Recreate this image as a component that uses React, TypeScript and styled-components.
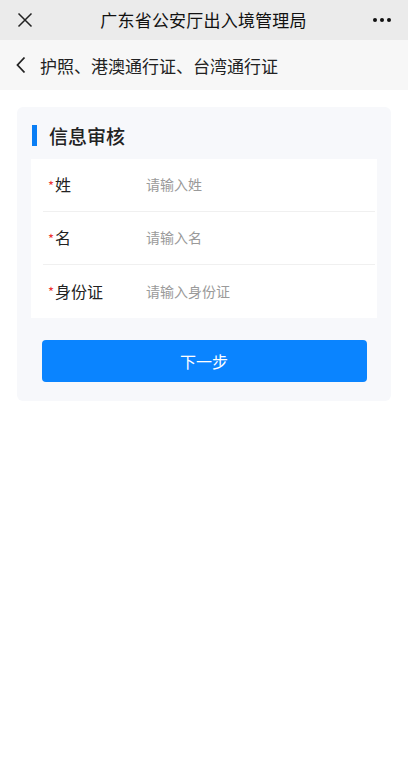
import styled, { createGlobalStyle } from "styled-components";

const GlobalStyle = createGlobalStyle`
  html, body {
    margin: 0;
    padding: 0;
    background: #ffffff;
    font-family: "Noto Sans CJK SC", "Noto Sans", sans-serif;
  }
`;

const Page = styled.div`
  width: 408px;
  min-height: 782px;
  background: #ffffff;
`;

const TopBar = styled.header`
  height: 40px;
  background: #ebebeb;
  display: flex;
  align-items: center;
  justify-content: space-between;
  padding: 0 14px 0 13px;
  box-sizing: border-box;
`;

const TopTitle = styled.h1`
  margin: 0 0 2px 0;
  font-size: 17px;
  font-weight: 400;
  color: #111;
  letter-spacing: 0.2px;
`;

const IconBox = styled.div`
  width: 24px;
  display: flex;
  align-items: center;
  justify-content: center;
`;

const SubBar = styled.div`
  height: 50px;
  background: #f7f7f7;
  display: flex;
  align-items: center;
  padding-left: 15px;
  gap: 13px;
`;

const SubTitle = styled.span`
  font-size: 17px;
  color: #222;
`;

const Body = styled.main`
  padding: 17px 17px 0 17px;
`;

const Card = styled.section`
  background: #f7f8fb;
  border-radius: 6px;
  padding: 17px 14px 19px 14px;
`;

const SectionTitle = styled.h2`
  margin: 0 0 13px 0;
  display: flex;
  align-items: center;
  gap: 12px;
  font-size: 19px;
  font-weight: 500;
  color: #222;
  height: 22px;
  &::before {
    content: "";
    width: 5px;
    height: 21px;
    background: #0a7ef5;
    margin-left: 1px;
  }
`;

const Form = styled.div`
  background: #ffffff;
  padding: 0 2px 0 12px;
`;

const Row = styled.div<{ $last?: boolean }>`
  box-sizing: border-box;
  height: 53px;
  padding-bottom: 2px;
  display: flex;
  align-items: center;
  border-bottom: ${(p) => (p.$last ? "none" : "1px solid #f0f0f0")};
`;

const Label = styled.label`
  width: 103px;
  padding-left: 5px;
  box-sizing: border-box;
  font-size: 16px;
  color: #222;
  display: flex;
  align-items: center;
`;

const Star = styled.span`
  color: #e33;
  font-size: 13px;
  margin-right: 1px;
  padding-top: 2px;
`;

const Input = styled.input`
  border: none;
  outline: none;
  background: transparent;
  font-family: inherit;
  font-size: 14px;
  color: #333;
  flex: 1;
  padding: 0;
  &::placeholder {
    color: #9a9a9a;
  }
`;

const Button = styled.button`
  display: block;
  width: 325px;
  height: 42px;
  margin: 22px auto 0 auto;
  background: #0a84ff;
  border: none;
  border-radius: 4px;
  color: #ffffff;
  font-family: inherit;
  font-size: 16px;
`;

const fields = [
  { label: "姓", placeholder: "请输入姓" },
  { label: "名", placeholder: "请输入名" },
  { label: "身份证", placeholder: "请输入身份证" },
];

export default function App() {
  return (
    <Page>
      <GlobalStyle />
      <TopBar>
        <IconBox>
          <svg width="16" height="16" viewBox="0 0 16 16">
            <path d="M1.5 1.5 L14.5 14.5 M14.5 1.5 L1.5 14.5" stroke="#222" strokeWidth="1.5" fill="none" />
          </svg>
        </IconBox>
        <TopTitle>广东省公安厅出入境管理局</TopTitle>
        <IconBox>
          <svg width="20" height="6" viewBox="0 0 20 6">
            <circle cx="3" cy="3" r="2" fill="#111" />
            <circle cx="10" cy="3" r="2" fill="#111" />
            <circle cx="17" cy="3" r="2" fill="#111" />
          </svg>
        </IconBox>
      </TopBar>
      <SubBar>
        <svg width="12" height="18" viewBox="0 0 12 18">
          <path d="M9.5 1.5 L2.5 9 L9.5 16.5" stroke="#222" strokeWidth="1.8" fill="none" />
        </svg>
        <SubTitle>护照、港澳通行证、台湾通行证</SubTitle>
      </SubBar>
      <Body>
        <Card>
          <SectionTitle>信息审核</SectionTitle>
          <Form>
            {fields.map((f, i) => (
              <Row key={f.label} $last={i === fields.length - 1}>
                <Label>
                  <Star>*</Star>
                  {f.label}
                </Label>
                <Input placeholder={f.placeholder} />
              </Row>
            ))}
          </Form>
          <Button>下一步</Button>
        </Card>
      </Body>
    </Page>
  );
}
